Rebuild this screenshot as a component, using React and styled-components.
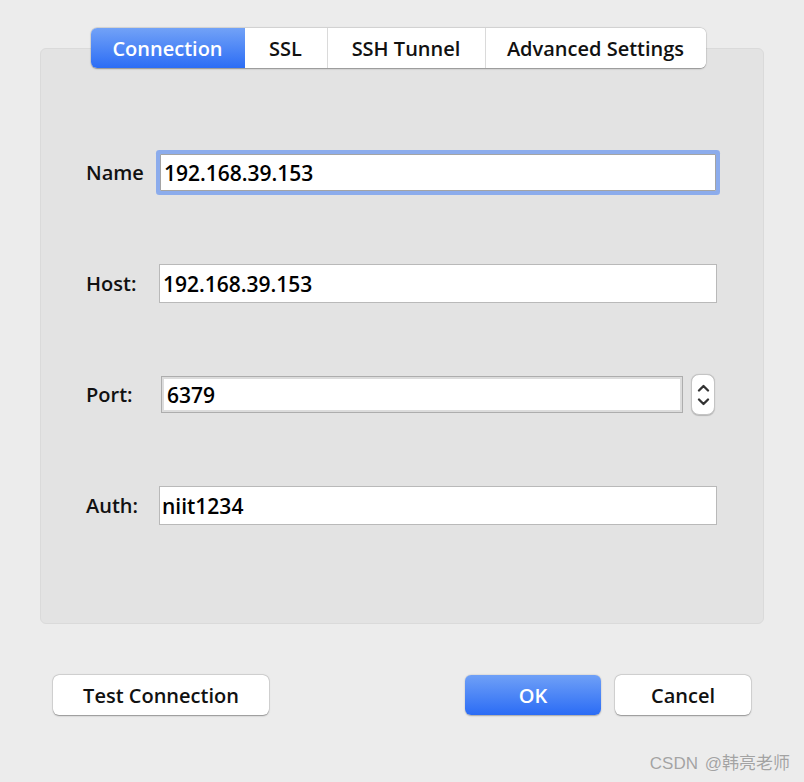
import React from "react";
import styled, { createGlobalStyle } from "styled-components";

const Global = createGlobalStyle`
  html, body { margin: 0; padding: 0; background: #ececec; }
  body { font-family: "Open Sans", "Noto Sans", sans-serif; color: #000; font-weight: 600; }
  * { box-sizing: border-box; }
`;

const Window = styled.div`
  width: 804px;
  height: 782px;
  background: #ececec;
  padding: 28px 40px 0 40px;
  display: flex;
  flex-direction: column;
`;

const TabArea = styled.div`
  display: flex;
  flex-direction: column;
`;

const TabBarRow = styled.div`
  display: flex;
  justify-content: center;
  margin-bottom: -20px;
  padding-right: 8px;
  position: relative;
  z-index: 1;
`;

const TabBar = styled.div`
  display: flex;
  height: 40px;
  background: #fff;
  border-radius: 6px;
  box-shadow: 0 0.5px 1.5px rgba(0, 0, 0, 0.35), 0 0 0 0.5px rgba(0, 0, 0, 0.08);
  overflow: hidden;
`;

const Tab = styled.div`
  display: flex;
  align-items: center;
  justify-content: center;
  width: ${(p) => p.$w}px;
  font-size: 20px;
  color: ${(p) => (p.$active ? "#fff" : "#111")};
  background: ${(p) =>
    p.$active ? "linear-gradient(#72a2f7, #2c6df5)" : "#fff"};
  border-left: ${(p) => (p.$first || p.$afterActive ? "none" : "1px solid #dadada")};
`;

const Panel = styled.div`
  height: 576px;
  background: #e3e3e3;
  border: 1px solid #dadada;
  border-radius: 6px;
  padding: 104px 46px 0 45px;
  display: grid;
  grid-template-columns: 73px 1fr;
  grid-auto-rows: 39px;
  row-gap: 72px;
  align-items: center;
`;

const Label = styled.div`
  font-size: 20px;
  color: #111;
`;

const Field = styled.div`
  height: ${(p) => p.$h || 39}px;
  background: #fff;
  border: 1px solid #b9b9b9;
  display: flex;
  align-items: center;
  padding-left: ${(p) => p.$pl || 3}px;
  font-size: 21px;
  color: #000;
  margin-left: ${(p) => p.$ml || 0}px;
  margin-right: ${(p) => p.$mr || 0}px;
  ${(p) =>
    p.$focused &&
    `border-color: #a4a4a4; box-shadow: 0 0 0 4px #8cacec; border-radius: 1px;`}
`;

const PortRow = styled.div`
  display: flex;
  align-items: center;
  gap: 8px;
  padding-left: 2px;
`;

const PortField = styled.div`
  flex: 1;
  height: 37px;
  background: #fff;
  border: 1px solid #adadad;
  box-shadow: inset 0 0 0 2px #dcdcdc;
  display: flex;
  align-items: center;
  padding-left: 5px;
  font-size: 21px;
`;

const Stepper = styled.div`
  width: 24px;
  height: 41px;
  margin-right: 2px;
  background: #fff;
  border: 1px solid #c4c4c4;
  border-radius: 8px;
  box-shadow: 0 0.5px 1px rgba(0, 0, 0, 0.2);
  display: flex;
  flex-direction: column;
  align-items: center;
  justify-content: center;
  gap: 6px;
`;

const ButtonRow = styled.div`
  display: flex;
  align-items: center;
  margin-top: 51px;
  padding: 0 13px;
`;

const Button = styled.div`
  width: ${(p) => p.$w}px;
  height: 40px;
  border-radius: 6px;
  display: flex;
  align-items: center;
  justify-content: center;
  font-size: 20px;
  margin-left: ${(p) => p.$ml || 0}px;
  color: ${(p) => (p.$primary ? "#fff" : "#111")};
  background: ${(p) => (p.$primary ? "linear-gradient(#6fa0f7, #2b6cf5)" : "#fff")};
  box-shadow: ${(p) =>
    p.$primary
      ? "0 0.5px 1.5px rgba(0,0,0,0.3)"
      : "0 0.5px 1.5px rgba(0,0,0,0.35), 0 0 0 0.5px rgba(0,0,0,0.12)"};
`;

const Spacer = styled.div`
  flex: 1;
`;

const Footer = styled.div`
  display: flex;
  justify-content: flex-end;
  margin-top: 34px;
  margin-right: -26px;
`;

const Watermark = styled.div`
  font-family: "Liberation Sans", "Noto Sans CJK SC", sans-serif;
  font-weight: 400;
  font-size: 17px;
  color: #a3a3a3;
  word-spacing: 2px;
  text-shadow: 0 0 1px rgba(255, 255, 255, 0.6);
`;

const Chevron = ({ up }) => (
  <svg width="13" height="8" viewBox="0 0 13 8">
    <path
      d={up ? "M2 6.5 L6.5 2 L11 6.5" : "M2 1.5 L6.5 6 L11 1.5"}
      fill="none"
      stroke="#333"
      strokeWidth="2.3"
      strokeLinecap="round"
      strokeLinejoin="round"
    />
  </svg>
);

export default function App() {
  return (
    <>
      <Global />
      <Window>
        <TabArea>
          <TabBarRow>
            <TabBar>
              <Tab $w={154} $active $first>Connection</Tab>
              <Tab $w={82} $afterActive>SSL</Tab>
              <Tab $w={158}>SSH Tunnel</Tab>
              <Tab $w={221}>Advanced Settings</Tab>
            </TabBar>
          </TabBarRow>
          <Panel>
            <Label>Name</Label>
            <Field $focused $ml={1} $mr={1} $h={37}>192.168.39.153</Field>
            <Label>Host:</Label>
            <Field>192.168.39.153</Field>
            <Label>Port:</Label>
            <PortRow>
              <PortField>6379</PortField>
              <Stepper>
                <Chevron up />
                <Chevron />
              </Stepper>
            </PortRow>
            <Label>Auth:</Label>
            <Field $pl={2}>niit1234</Field>
          </Panel>
        </TabArea>
        <ButtonRow>
          <Button $w={216}>Test Connection</Button>
          <Spacer />
          <Button $w={136} $primary>OK</Button>
          <Button $w={136} $ml={14}>Cancel</Button>
        </ButtonRow>
        <Footer>
          <Watermark>CSDN @韩亮老师</Watermark>
        </Footer>
      </Window>
    </>
  );
}
